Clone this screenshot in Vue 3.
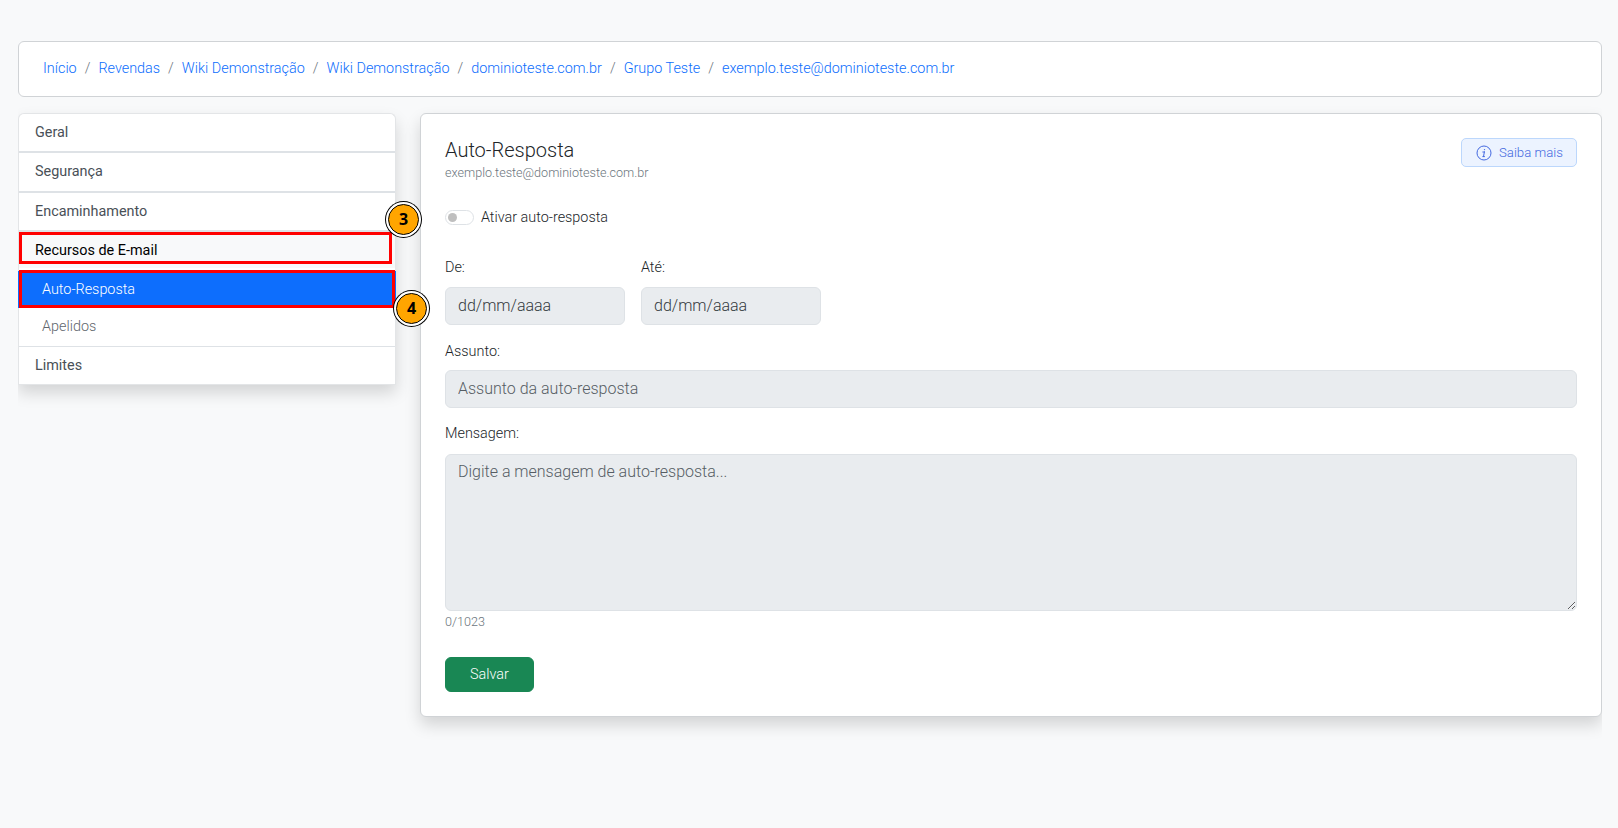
<template>
  <div class="page">
    <nav class="breadcrumb">
      <template v-for="(item, i) in crumbs" :key="i">
        <span v-if="i > 0" class="sep">/</span>
        <a href="#">{{ item }}</a>
      </template>
    </nav>

    <div class="columns">
      <aside class="side">
        <ul class="menu">
          <li class="item">Geral</li>
          <li class="item">Segurança</li>
          <li class="item">Encaminhamento</li>
          <li class="item open">Recursos de E-mail</li>
          <li class="sub active">Auto-Resposta</li>
          <li class="sub">Apelidos</li>
          <li class="item last">Limites</li>
        </ul>
        <div class="mark mark-3"></div>
        <div class="mark mark-4"></div>
        <span class="badge badge-3">3</span>
        <span class="badge badge-4">4</span>
      </aside>

      <main class="panel">
        <header class="head">
          <div>
            <h1>Auto-Resposta</h1>
            <p class="mail">exemplo.teste@dominioteste.com.br</p>
          </div>
          <button class="more" type="button">
            <svg width="16" height="16" viewBox="0 0 16 16" fill="none" stroke="currentColor">
              <circle cx="8" cy="8" r="7" />
              <path d="M8.4 6.8 7.5 11.6M6.8 7h1.6M6.8 11.6h1.7" stroke-linecap="round" />
              <circle cx="8.5" cy="4.6" r=".7" fill="currentColor" stroke="none" />
            </svg>
            Saiba mais
          </button>
        </header>

        <div class="switch-row">
          <span class="switch"><i></i></span>
          <label>Ativar auto-resposta</label>
        </div>

        <div class="dates">
          <div class="date">
            <label>De:</label>
            <input type="text" value="dd/mm/aaaa" disabled />
          </div>
          <div class="date">
            <label>Até:</label>
            <input type="text" value="dd/mm/aaaa" disabled />
          </div>
        </div>

        <div class="field subject">
          <label>Assunto:</label>
          <input type="text" placeholder="Assunto da auto-resposta" disabled />
        </div>

        <div class="field message">
          <label>Mensagem:</label>
          <textarea placeholder="Digite a mensagem de auto-resposta..." disabled></textarea>
          <small>0/1023</small>
        </div>

        <button class="save" type="button">Salvar</button>
      </main>
    </div>
  </div>
</template>

<script setup>
const crumbs = [
  'Início',
  'Revendas',
  'Wiki Demonstração',
  'Wiki Demonstração',
  'dominioteste.com.br',
  'Grupo Teste',
  'exemplo.teste@dominioteste.com.br',
]
</script>

<style>
html,
body {
  margin: 0;
  background: #f8f9fa;
}
</style>

<style scoped>
.page {
  box-sizing: border-box;
  height: 828px;
  overflow: hidden;
  padding: 41px 16px 0 18px;
  font-family: Roboto, 'Liberation Sans', sans-serif;
  font-size: 14.4px;
  font-weight: 300;
  color: #212529;
}

.breadcrumb {
  box-sizing: border-box;
  height: 56px;
  display: flex;
  align-items: center;
  padding: 0 24px 2px;
  background: #fff;
  border: 1px solid #d0d3d6;
  border-radius: 6px;
}

.breadcrumb a {
  color: #0d6efd;
  text-decoration: none;
}

.sep {
  padding: 0 8px;
  color: #6c757d;
}

.columns {
  display: flex;
  gap: 24px;
  margin-top: 16px;
  align-items: flex-start;
}

.side {
  position: relative;
  z-index: 1;
  width: 378px;
  flex: none;
}

.menu {
  list-style: none;
  margin: 0;
  padding: 0;
  background: #fff;
  border: 1px solid #e3e5e7;
  border-bottom: 0;
  box-sizing: border-box;
  border-radius: 6px 6px 0 0;
  box-shadow: 0 8px 16px rgba(0, 0, 0, 0.15);
  clip-path: inset(-40px -40px -40px 0);
}

.item {
  box-sizing: border-box;
  height: 39.3px;
  line-height: 38px;
  padding-left: 16px;
  font-weight: 400;
  color: #495057;
  border-bottom: 2px solid #dee2e6;
}

.item.open {
  background: #f8f9fa;
  color: #000;
  height: 36px;
  margin-bottom: 3px;
  line-height: 37px;
  border-bottom: 0;
}

.item.last {
  border-bottom: 1px solid #e3e5e7;
  border-top: 1px solid #dee2e6;
}

.sub {
  height: 37.5px;
  line-height: 37px;
  padding-left: 23px;
  color: #5f666d;
}

.sub.active {
  background: #0d6efd;
  color: #fff;
  margin: 0 -1px;
  padding-left: 24px;
}

.mark {
  position: absolute;
  box-sizing: border-box;
  border: 3px solid #f00;
}

.mark-3 {
  left: 1px;
  top: 119px;
  width: 373px;
  height: 32px;
}

.mark-4 {
  left: 1px;
  top: 156.5px;
  width: 376px;
  height: 38.5px;
}

.badge {
  position: absolute;
  box-sizing: border-box;
  width: 31px;
  height: 31px;
  border-radius: 50%;
  background: #ffa500;
  border: 1px solid #000;
  box-shadow: 0 0 0 2px #fff, 0 0 0 3px #000;
  color: #000;
  font-family: 'Open Sans', sans-serif;
  font-size: 16px;
  font-weight: 700;
  line-height: 29px;
  text-align: center;
}

.badge-3 {
  left: 370px;
  top: 91px;
}

.badge-4 {
  left: 378px;
  top: 180px;
}

.panel {
  flex: 1;
  box-sizing: border-box;
  height: 604px;
  padding: 24px;
  background: #fff;
  border: 1px solid #d0d3d6;
  border-radius: 6px;
  box-shadow: 0 8px 16px rgba(0, 0, 0, 0.15);
  clip-path: inset(-40px 0 -40px -40px);
}

.head {
  display: flex;
  justify-content: space-between;
  align-items: flex-start;
}

h1 {
  margin: 0;
  font-size: 20px;
  font-weight: 300;
  line-height: 24px;
}

.mail {
  margin: 3px 0 0;
  font-size: 12.6px;
  line-height: 16px;
  color: #6c757d;
}

.more {
  display: flex;
  align-items: center;
  gap: 7px;
  height: 29px;
  width: 116px;
  padding: 0 14px;
  box-sizing: border-box;
  background: #ecf3ff;
  border: 1px solid #bcd7fc;
  border-radius: 5px;
  color: #4469e0;
  font: inherit;
  font-size: 13.2px;
  white-space: nowrap;
}

.more svg {
  flex: none;
}

.switch-row {
  display: flex;
  align-items: center;
  gap: 7px;
  margin-top: 25px;
  height: 22px;
}

.switch {
  box-sizing: border-box;
  width: 29px;
  height: 15px;
  border: 1px solid #dee2e6;
  border-radius: 8px;
  background: #fff;
  display: flex;
  align-items: center;
  padding-left: 2px;
}

.switch i {
  width: 9px;
  height: 9px;
  border-radius: 50%;
  background: #bfbfbf;
}

label {
  display: block;
}

.dates {
  display: flex;
  gap: 16px;
  margin-top: 30px;
}

.date {
  width: 180px;
}

.date label {
  line-height: 20px;
  margin-bottom: 9px;
}

.field label {
  line-height: 20px;
}

.subject {
  margin-top: 17px;
}

.subject label {
  margin-bottom: 8px;
}

.message {
  margin-top: 16px;
}

.message label {
  margin-bottom: 10px;
}

input,
textarea {
  display: block;
  box-sizing: border-box;
  width: 100%;
  background: #e9ecef;
  border: 1px solid #dee2e6;
  border-radius: 6px;
  padding: 7px 12px;
  font-family: inherit;
  font-size: 16px;
  font-weight: 300;
  color: #212529;
  margin: 0;
}

input {
  height: 38px;
  padding: 6px 12px 8px;
}

.date input {
  color: #343a40;
  -webkit-text-fill-color: #343a40;
  opacity: 1;
}

input::placeholder,
textarea::placeholder {
  color: #565d64;
  opacity: 1;
}

textarea {
  height: 157px;
  resize: vertical;
}

small {
  display: block;
  margin-top: 3px;
  font-size: 12.6px;
  line-height: 16px;
  color: #6c757d;
}

.save {
  display: block;
  margin-top: 27px;
  width: 89px;
  height: 35px;
  background: #198754;
  border: 1px solid #198754;
  border-radius: 6px;
  color: #fff;
  font: inherit;
  font-size: 14.4px;
}
</style>
